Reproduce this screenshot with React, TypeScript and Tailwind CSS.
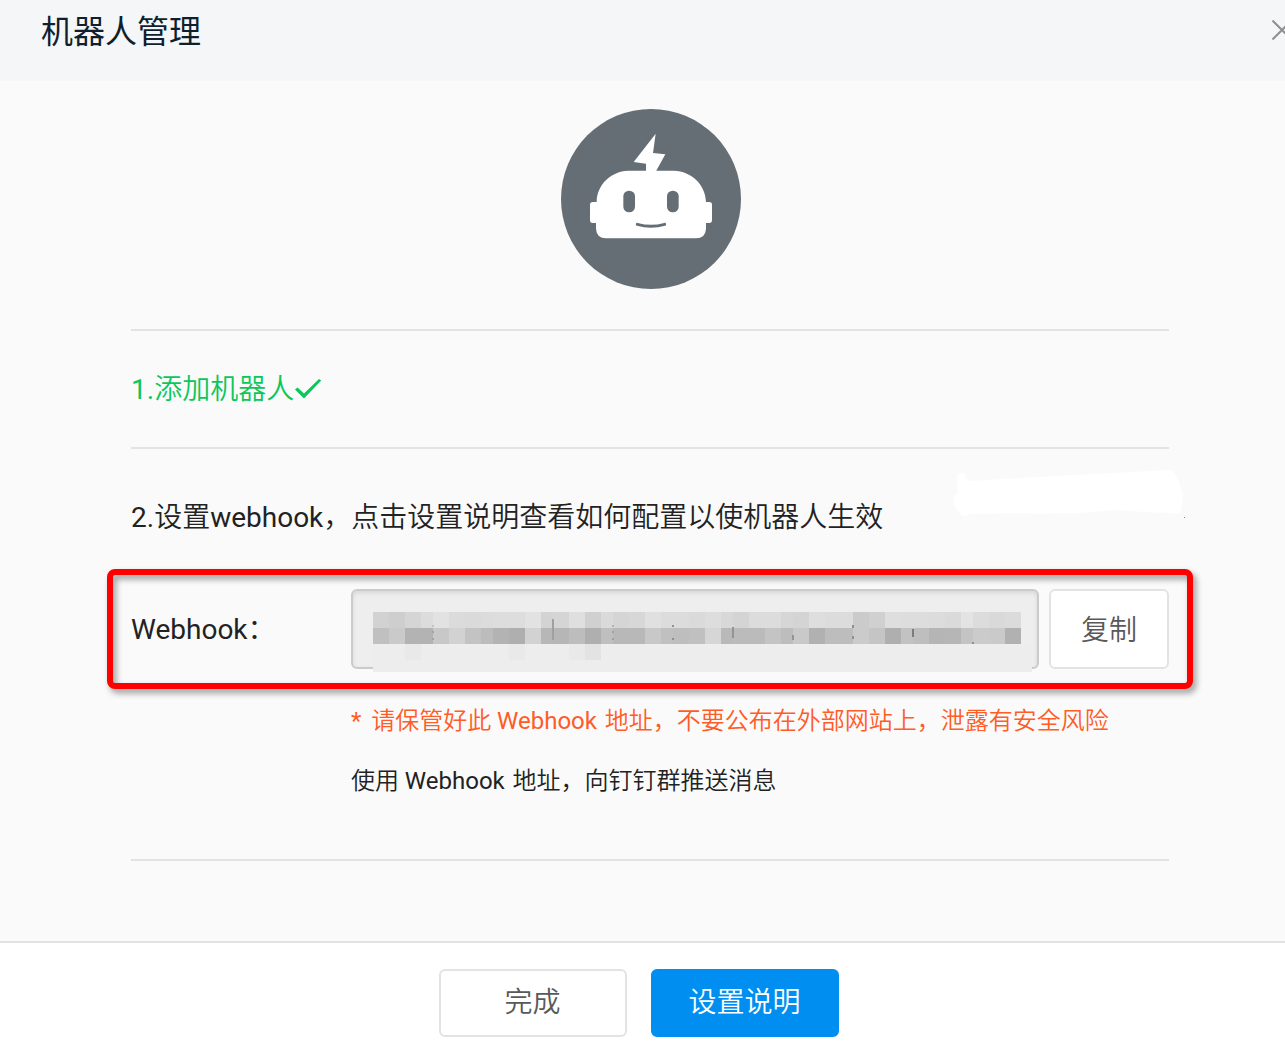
import type { ReactNode } from 'react'

// 16px mosaic blocks, cut every 60px: three full ones and a 12px rest
const MOSAIC_TOP = [
  'd2', 'ce', 'd5', 'dc', 'e2', 'db', 'da', 'dc', 'dd', 'dd', 'e2', 'd3', 'd5', 'df', 'd0', 'da',
  'd5', 'd7', 'e0', 'dc', 'dc', 'da', 'dd', 'd8', 'd4', 'dc', 'dc', 'd6', 'd4', 'de', 'dc', 'dc',
  'cb', 'd0', 'de', 'dd', 'dd', 'dc', 'da', 'e3', 'dc', 'd9', 'db',
]

const MOSAIC_MIDDLE = [
  'c0', 'ca', 'b3', 'b3', 'c8', 'd2', 'c3', 'bc', 'b3', 'af', 'd2', 'b7', 'b6', 'bd', 'af', 'bf',
  'b8', 'b8', 'c8', 'c0', 'be', 'c0', 'd6', 'b9', 'bb', 'bb', 'c4', 'bd', 'c9', 'b1', 'bd', 'bd',
  'cb', 'c5', 'af', 'c2', 'be', 'b5', 'b6', 'c4', 'cb', 'ca', 'b1',
]

// x, y, height, shade
const SPECKS: [number, number, number, string][] = [
  [59, 13, 2, 'c4'], [59, 19, 2, 'a4'], [59, 26, 2, 'a4'],
  [179, 7, 21, 'a0'],
  [239, 13, 2, 'b4'], [239, 19, 2, 'a0'], [239, 26, 2, 'a0'],
  [299, 13, 2, '90'], [299, 26, 2, '90'],
  [359, 15, 11, '94'], [419, 23, 5, '94'],
  [479, 13, 3, '90'], [479, 24, 3, '90'],
  [539, 17, 8, '7c'], [599, 30, 2, '90'],
]

function blockX(index: number): number {
  return Math.floor(index / 4) * 60 + (index % 4) * 16
}

function blockWidth(index: number): number {
  return index % 4 === 3 ? 12 : 16
}

function gray(value: string): string {
  return `#${value}${value}${value}`
}

function Mosaic() {
  return (
    <svg
      className="absolute left-[22px] top-[23px] pointer-events-none"
      width="659"
      height="60"
      shapeRendering="crispEdges"
      aria-hidden="true"
    >
      <rect y="34" width="659" height="26" fill="#ededed" />
      {MOSAIC_TOP.map((value, i) => (
        <rect key={i} x={blockX(i)} y="0" width={blockWidth(i)} height="16" fill={gray(value)} />
      ))}
      {MOSAIC_MIDDLE.map((value, i) => (
        <rect key={i} x={blockX(i)} y="16" width={blockWidth(i)} height="16" fill={gray(value)} />
      ))}
      <rect x="32" y="32" width="16" height="16" fill="#e9e9e9" />
      <rect x="136" y="32" width="16" height="16" fill="#e9e9e9" />
      <rect x="196" y="32" width="16" height="16" fill="#e9e9e9" />
      <rect x="212" y="32" width="16" height="16" fill="#e3e3e3" />
      {SPECKS.map(([x, y, height, shade]) => (
        <rect key={`${x}-${y}`} x={x} y={y} width="2" height={height} fill={gray(shade)} />
      ))}
    </svg>
  )
}

function RobotAvatar() {
  return (
    <svg className="size-[180px]" viewBox="33 27 540 540" role="img" aria-label="机器人">
      <circle cx="303" cy="297" r="270" fill="#656e74" />
      <path d="M317 101 309 159 346 163 318 214H288V191L251 186Z" fill="#fff" />
      <path
        d="M234 212H372C424 214 466 252 468 306H478Q486 306 486 314V361Q486 369 478 369H468V387Q466 415 438 415H168Q140 415 138 387V369H128Q120 369 120 361V314Q120 306 128 306H140C141 252 184 214 234 212Z"
        fill="#fff"
      />
      <rect x="220" y="272" width="35" height="65" rx="17" fill="#656e74" />
      <rect x="351" y="272" width="35" height="65" rx="17" fill="#656e74" />
      <path d="M262 373Q303 385 344 373" fill="none" stroke="#656e74" strokeWidth="9" strokeLinecap="round" />
    </svg>
  )
}

function Divider() {
  return <hr className="border-0 h-[2px] bg-[#e3e3e3]" />
}

interface FooterButtonProps {
  primary?: boolean
  children: ReactNode
}

function FooterButton({ primary, children }: FooterButtonProps) {
  return (
    <button
      type="button"
      className={`
        w-[188px] h-[68px] rounded-md border-2 text-[28px] leading-8
        ${primary ? 'bg-[#008ff0] border-[#008ff0] text-white' : 'bg-white border-[#e3e3e3] text-[#595959]'}
      `}
    >
      {children}
    </button>
  )
}

export default function App() {
  return (
    <div className="min-h-screen bg-white overflow-hidden text-[#222] font-[350] font-[Roboto,'Noto_Sans_CJK_SC',sans-serif]">
      <header className="flex items-start justify-between h-[81px] pt-3 pl-[41px] bg-[#f4f6f8]">
        <h1 className="text-[32px] leading-10 font-normal text-[#0f1f2e]">机器人管理</h1>
        <button type="button" aria-label="关闭" className="mt-2 -mr-2 text-[#8f8f8f]">
          <svg width="21" height="20" viewBox="0 0 21 20" fill="none" stroke="currentColor" strokeWidth="2">
            <path d="M0.5 0.5 19.5 19.5M19.5 0.5 0.5 19.5" />
          </svg>
        </button>
      </header>

      <main className="pl-[131px] pr-[116px] pt-7 pb-20 bg-[#fafafa]">
        <div className="flex justify-center pl-0.5 mb-10">
          <RobotAvatar />
        </div>
        <Divider />

        <h2 className="flex items-center h-[116px] pt-0.5 text-[28px] font-[350] text-[#0bc75b]">
          <span className="font-normal">1.</span>
          添加机器人
          <svg width="28" height="22" viewBox="0 0 28 22" fill="currentColor" aria-hidden="true">
            <path d="M1 10.5 3.500 8.500 10 14.500 25 0 27.200 1.500 10 19.500Z" />
          </svg>
        </h2>
        <Divider />

        <section className="pt-12 pb-12">
          <div className="relative">
            <h2 className="text-[28px] leading-10 pt-px font-[350]">
              <span className="font-normal">2.</span>设置<span className="font-normal">webhook</span>
              ，点击设置说明查看如何配置以使机器人生效
            </h2>
            <svg
              className="absolute -top-7 -right-4 pointer-events-none"
              width="232"
              height="50"
              viewBox="0 0 232 50"
              aria-hidden="true"
            >
              <path
                d="M4 8Q6 2 12 5L15 12Q120 6 217 1Q225 4 230 28Q229 44 226 44Q200 44 162 41Q110 46 70 44L17 45Q11 50 6 43Q-5 32 5 23Z"
                fill="#fff"
              />
              <rect x="231" y="48" width="1" height="1" fill="#888" />
            </svg>
          </div>

          <div className="relative flex items-center mt-[51px]">
            <label htmlFor="webhook" className="w-[220px] pt-0.5 text-[28px] leading-10">
              <span className="font-normal">Webhook</span>：
            </label>
            <div className="relative flex-1">
              <input
                id="webhook"
                type="text"
                readOnly
                className="block w-full h-20 px-5 rounded-md border-2 border-[#cbcbcb] bg-[#eee] text-2xl shadow-[inset_0_2px_4px_rgba(0,0,0,0.1)]"
              />
              <Mosaic />
            </div>
            <button
              type="button"
              className="ml-[10px] w-[120px] h-20 pt-1 rounded-md border-2 border-[#e3e3e3] bg-white text-[28px] leading-10 text-[#595959]"
            >
              复制
            </button>
            <div className="absolute -inset-x-6 -inset-y-5 rounded-lg border-6 border-[#ff0000] pointer-events-none drop-shadow-[3px_4px_3px_rgba(0,0,0,0.4)]" />
          </div>

          <div className="mt-[22px] pl-[220px] text-2xl">
            <p className="leading-[60px] text-[#ff5c26]">
              <span className="mr-1 font-normal">*</span> 请保管好此{' '}
              <span className="mr-0.5 font-normal">Webhook</span> 地址，不要公布在外部网站上，泄露有安全风险
            </p>
            <p className="leading-[60px]">
              使用 <span className="mr-0.5 font-normal">Webhook</span> 地址，向钉钉群推送消息
            </p>
          </div>
        </section>
        <Divider />
      </main>

      <footer className="flex justify-center gap-6 pt-[26px] pr-2 pb-[7px] border-t-2 border-[#e3e3e3] bg-white">
        <FooterButton>完成</FooterButton>
        <FooterButton primary>设置说明</FooterButton>
      </footer>
    </div>
  )
}
